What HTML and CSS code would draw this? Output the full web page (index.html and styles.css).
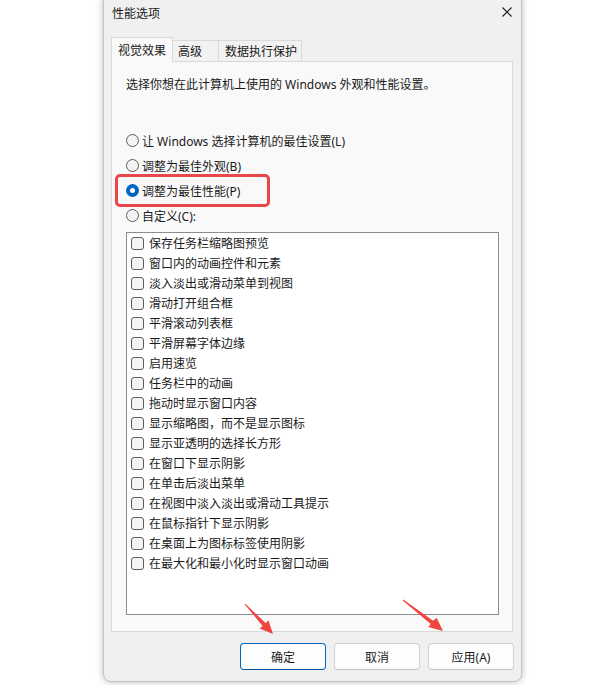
FILE: index.html
```html
<!DOCTYPE html>
<html lang="zh-CN">
<head>
  <meta charset="UTF-8" />
  <meta name="viewport" content="width=device-width, initial-scale=1.0"/>
  <title>性能选项</title>
  <link rel="stylesheet" href="styles.css">
</head>
<body>

  <div class="window">
    <div class="titlebar">
      <span class="title">性能选项</span>
      <svg class="close" width="10" height="10" viewBox="0 0 10 10">
        <path d="M0.5 0.5 L9.5 9.5 M9.5 0.5 L0.5 9.5" stroke="#1a1a1a" stroke-width="1.1" fill="none"/>
      </svg>
    </div>

    <div class="tabs">
      <div class="tab active">视觉效果</div>
      <div class="tab tab-adv">高级</div>
      <div class="tab tab-dep">数据执行保护</div>
    </div>

    <div class="panel">
      <div class="desc">选择你想在此计算机上使用的 Windows 外观和性能设置。</div>

      <div class="radio-row"><span class="radio"></span><span>让 Windows 选择计算机的最佳设置(L)</span></div>
      <div class="radio-row"><span class="radio"></span><span>调整为最佳外观(B)</span></div>
      <div class="radio-row"><span class="radio checked"></span><span>调整为最佳性能(P)</span></div>
      <div class="radio-row"><span class="radio"></span><span>自定义(C):</span></div>

      <div class="list">
        <div class="item"><span class="check"></span>保存任务栏缩略图预览</div>
        <div class="item"><span class="check"></span>窗口内的动画控件和元素</div>
        <div class="item"><span class="check"></span>淡入淡出或滑动菜单到视图</div>
        <div class="item"><span class="check"></span>滑动打开组合框</div>
        <div class="item"><span class="check"></span>平滑滚动列表框</div>
        <div class="item"><span class="check"></span>平滑屏幕字体边缘</div>
        <div class="item"><span class="check"></span>启用速览</div>
        <div class="item"><span class="check"></span>任务栏中的动画</div>
        <div class="item"><span class="check"></span>拖动时显示窗口内容</div>
        <div class="item"><span class="check"></span>显示缩略图，而不是显示图标</div>
        <div class="item"><span class="check"></span>显示亚透明的选择长方形</div>
        <div class="item"><span class="check"></span>在窗口下显示阴影</div>
        <div class="item"><span class="check"></span>在单击后淡出菜单</div>
        <div class="item"><span class="check"></span>在视图中淡入淡出或滑动工具提示</div>
        <div class="item"><span class="check"></span>在鼠标指针下显示阴影</div>
        <div class="item"><span class="check"></span>在桌面上为图标标签使用阴影</div>
        <div class="item"><span class="check"></span>在最大化和最小化时显示窗口动画</div>
      </div>
    </div>

    <div class="buttons">
      <button class="btn primary">确定</button>
      <button class="btn">取消</button>
      <button class="btn">应用(A)</button>
    </div>
  </div>

  <!-- annotation: red highlight + arrows -->
  <div class="highlight"></div>
  <svg class="arrows" width="600" height="685" viewBox="0 0 600 685">
    <polygon fill="#f0463f" points="244.6,604.3 262.6,625.9 259.7,628.6 273,634 268.5,620.4 265.6,623.1 245.4,603.7"/>
    <polygon fill="#f0463f" points="402.7,600.4 430.7,624.0 428.2,627.1 443,631 436.6,617.7 433.1,620.8 403.3,599.6"/>
  </svg>

</body>
</html>
```

FILE: styles.css
```css
body {
  margin: 0;
  background: #ffffff;
  height: 685px;
  overflow: hidden;
  position: relative;
  font-family: "Segoe UI", "Noto Sans", "Noto Sans CJK SC", sans-serif;
  font-size: 12px;
  color: #1a1a1a;
}

.window {
  margin-left: 103px;
  margin-top: -6px;
  width: 419px;
  height: 688px;
  box-sizing: border-box;
  background: #f0f0f0;
  border: 1px solid #c4c4c4;
  border-radius: 8px;
  box-shadow: 0 0 7px rgba(0,0,0,0.28);
}

.titlebar {
  height: 43px;
  box-sizing: border-box;
  padding: 11px 9px 0 8px;
  display: flex;
  align-items: flex-start;
  line-height: 16px;
}

.close {
  margin-left: auto;
  margin-top: 1px;
}

.tabs {
  margin-left: 7px;
  height: 23px;
  display: flex;
  align-items: flex-start;
}

.tab {
  box-sizing: border-box;
  border: 1px solid #d9d9d9;
  border-bottom: 0;
  line-height: 16px;
  background: #f2f2f2;
  margin-top: 2px;
  height: 21px;
  padding-top: 3px;
}

.tab.active {
  width: 62px;
  height: 25px;
  margin-top: -1px;
  padding: 5px 0 0 6px;
  background: #f9f9f9;
  position: relative;
  z-index: 1;
}

.tab-adv {
  width: 46px;
  border-left: 0;
  padding-left: 5px;
}

.tab-dep {
  width: 83px;
  border-left: 0;
  padding-left: 6px;
}

.panel {
  margin-left: 7px;
  width: 402px;
  height: 571px;
  box-sizing: border-box;
  background: #f9f9f9;
  border: 1px solid #d9d9d9;
  padding-left: 14px;
}

.desc {
  margin-top: 15px;
  margin-bottom: 35px;
  line-height: 16px;
}

.radio-row {
  height: 25px;
  display: flex;
  align-items: center;
}

.radio {
  width: 13px;
  height: 13px;
  box-sizing: border-box;
  border: 1px solid #5c5c5c;
  border-radius: 50%;
  background: #f4f4f4;
  margin-right: 3px;
  flex: none;
}

.radio.checked {
  border: 4px solid #0067c0;
  background: #ffffff;
}

.list {
  margin-top: 4px;
  width: 373px;
  height: 383px;
  box-sizing: border-box;
  background: #ffffff;
  border: 1px solid #8d8d8d;
  padding-left: 4px;
}

.item {
  height: 20px;
  display: flex;
  align-items: center;
}

.check {
  width: 13px;
  height: 13px;
  box-sizing: border-box;
  border: 1px solid #5c5c5c;
  border-radius: 3px;
  background: #f4f4f4;
  margin-right: 5px;
  flex: none;
}

.buttons {
  display: flex;
  justify-content: flex-end;
  gap: 8px;
  margin-top: 11px;
  padding-right: 7px;
}

.btn {
  width: 86px;
  height: 27px;
  box-sizing: border-box;
  background: #fdfdfd;
  border: 1px solid #d2d2d2;
  border-bottom-color: #c2c2c2;
  border-radius: 4px;
  font-family: inherit;
  font-size: 12px;
  color: #1a1a1a;
  padding: 0;
}

.btn.primary {
  border: 1px solid #0067c0;
  border-bottom-color: #00539a;
}

.highlight {
  position: absolute;
  left: 115px;
  top: 174px;
  width: 155px;
  height: 33px;
  box-sizing: border-box;
  border: 3px solid #e9474a;
  border-radius: 5px;
}

.arrows {
  position: absolute;
  left: 0;
  top: 0;
}
```
